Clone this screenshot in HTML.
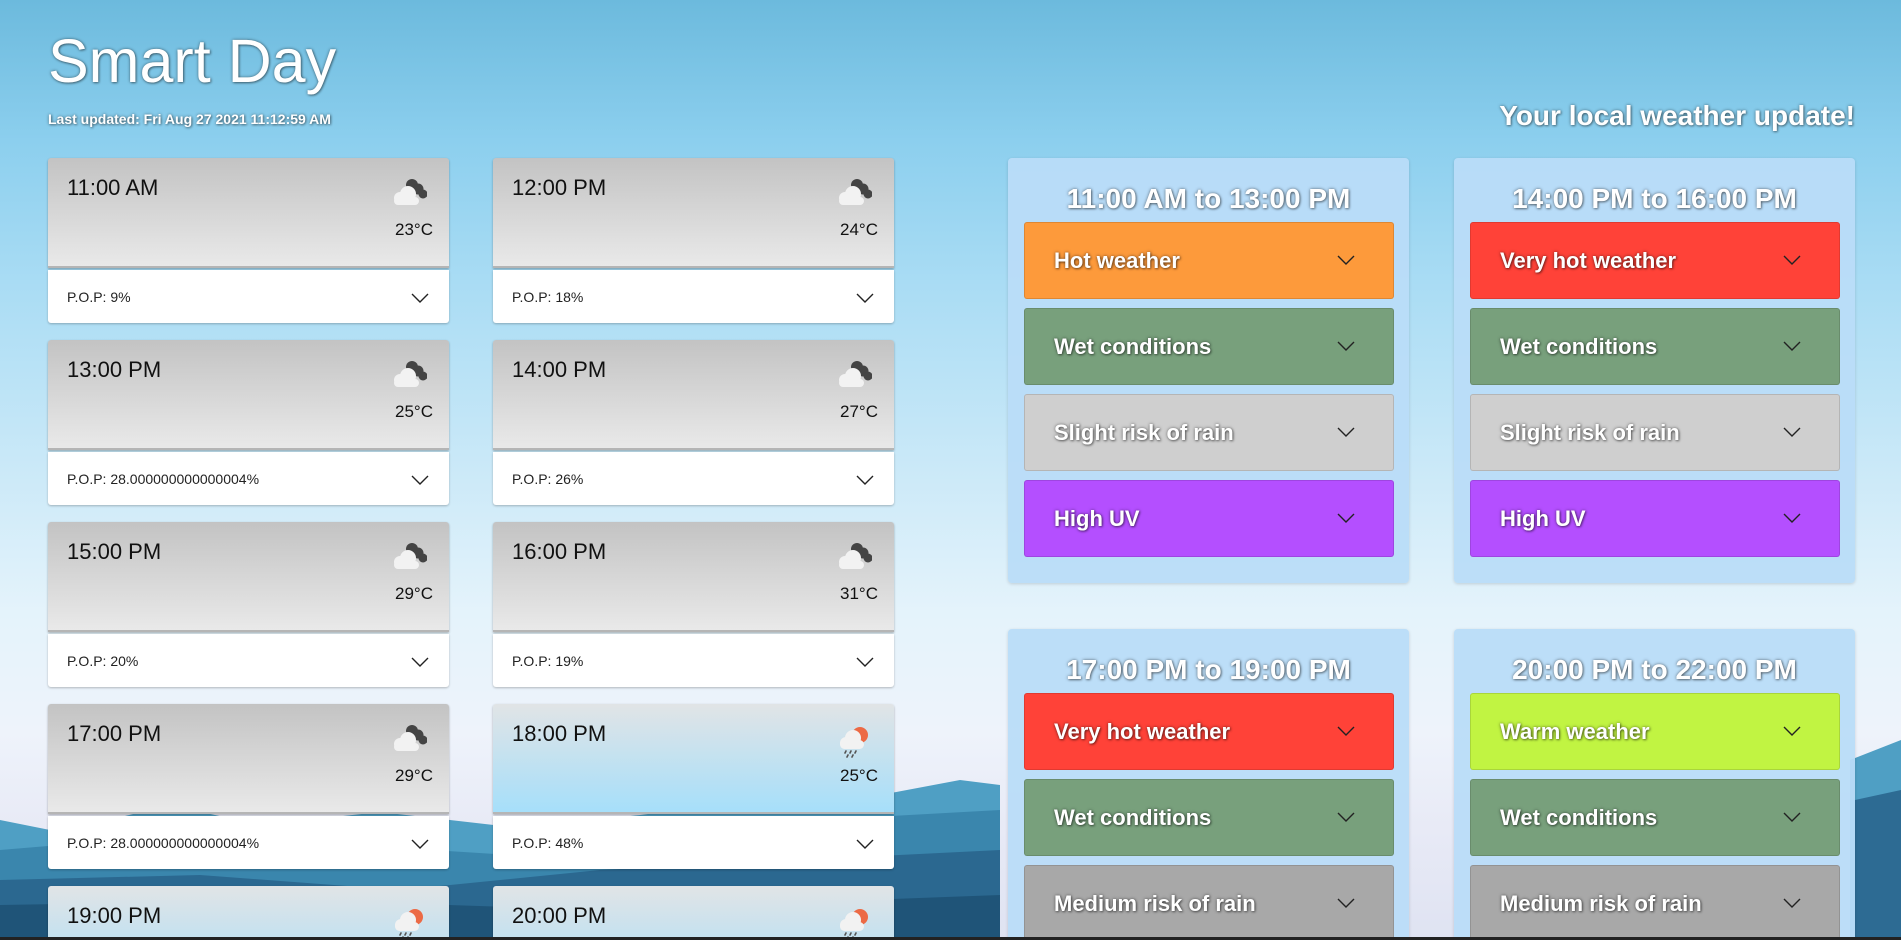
<!DOCTYPE html>
<html><head><meta charset="utf-8"><style>
*{margin:0;padding:0;box-sizing:border-box}
html{width:1901px;height:940px;overflow:hidden}
body{width:1901px;height:940px;overflow:hidden;position:relative;font-family:"Liberation Sans",sans-serif;}
#wrap{position:absolute;left:0;top:0;width:1901px;height:940px;overflow:hidden;
background:linear-gradient(180deg,#6cbadd 0%,#8ccfee 15%,#a9dcf4 30%,#cbe9f8 50%,#e4f3fb 65%,#eef3fb 78%,#e8eaf6 88%,#dfe3f2 100%);}
.bg{position:absolute;left:0;top:0}
.t{position:absolute;color:#fff;text-shadow:0 0 3px rgba(0,0,0,.45),1px 1px 2px rgba(0,0,0,.35)}
.card{position:absolute;width:401px;height:165px}
.top{position:absolute;left:0;top:0;width:401px;height:110px;border-radius:3px 3px 0 0;background:linear-gradient(180deg,#c3c3c3,#e9e9e9);box-shadow:0 1px 2px rgba(0,0,0,.3);border-bottom:2px solid #b5b5b5}
.top.b{background:linear-gradient(180deg,#e1e4e6,#a6dffa)}
.bot{position:absolute;left:0;top:112px;width:401px;height:53px;background:#fff;border-radius:0 0 3px 3px;box-shadow:0 1px 2px rgba(0,0,0,.25)}
.time{position:absolute;left:19px;top:17px;font-size:22px;color:#111}
.temp{position:absolute;right:16px;top:62px;font-size:17px;color:#111}
.pop{position:absolute;left:19px;top:19px;font-size:14px;color:#222}
.chev{position:absolute;right:20px;top:20px}
.ico{position:absolute;right:22px;top:20px}
.panel{position:absolute;width:401px;height:425px;background:rgba(185,220,248,.95);border-radius:4px;box-shadow:0 1px 3px rgba(0,0,0,.15)}
.ph{position:absolute;left:0;width:100%;top:25px;text-align:center;font-size:28px;font-weight:bold;color:#fff;text-shadow:0 0 3px rgba(0,0,0,.5),1px 1px 2px rgba(0,0,0,.35)}
.it{position:absolute;left:16px;width:370px;height:77px;border-radius:3px;border:1px solid rgba(0,0,0,.12)}
.it span{position:absolute;left:29px;top:25px;font-size:22px;font-weight:bold;color:#fff;text-shadow:0 0 3px rgba(0,0,0,.5),1px 1px 2px rgba(0,0,0,.4)}
.it svg{position:absolute;right:38px;top:32px}
.bar{position:absolute;left:0;top:937px;width:1901px;height:3px;background:#222;z-index:10}
</style></head><body>
<div id="wrap">
<svg class="bg" width="1901" height="940" viewBox="0 0 1901 940">
<polygon points="0,820 60,832 170,805 260,825 380,812 520,828 640,815 760,800 880,795 960,780 1000,785 1000,940 0,940" fill="#4f9fc4"/>
<polygon points="1850,760 1901,740 1901,940 1850,940" fill="#4f9fc4"/>
<polygon points="0,850 120,840 250,860 400,848 560,858 700,835 820,820 1000,810 1000,940 0,940" fill="#3a86ad"/>
<polygon points="1855,800 1901,790 1901,940 1855,940" fill="#2d6b93"/>
<polygon points="0,880 200,875 400,890 600,870 800,860 1000,850 1000,940 0,940" fill="#2b6890"/>
<polygon points="0,905 300,900 600,910 1000,895 1000,940 0,940" fill="#1f5478"/>
</svg>
<div class="t" style="left:48px;top:26px;font-size:61px">Smart Day</div>
<div class="t" style="left:48px;top:111px;font-size:14px;font-weight:bold">Last updated: Fri Aug 27 2021 11:12:59 AM</div>
<div class="t" style="right:46px;top:100px;font-size:28px;font-weight:bold">Your local weather update!</div>
<div id="cards"></div>
<div class="bar"></div>
</div>
<script>
const cloud='<svg width="36" height="28" viewBox="0 0 36 28"><g fill="#444"><circle cx="21" cy="7" r="6"/><circle cx="27" cy="11" r="5.5"/><circle cx="32" cy="16" r="4.5"/></g><g fill="#f2f2f2"><circle cx="9" cy="20" r="6"/><circle cx="17" cy="16" r="8"/><rect x="3" y="19" width="25" height="8" rx="4"/></g></svg>';
const rain='<svg width="36" height="34" viewBox="0 0 36 34"><circle cx="24" cy="11" r="8" fill="#ec6a45"/><g fill="#f2f2f2"><circle cx="10" cy="19" r="6"/><circle cx="17" cy="14" r="8"/><rect x="4" y="16" width="24" height="9" rx="4.5"/></g><g stroke="#555" stroke-width="1.6" stroke-linecap="round"><line x1="10" y1="27" x2="9" y2="29"/><line x1="15" y1="27" x2="14" y2="29"/><line x1="20" y1="27" x2="19" y2="29"/><line x1="12" y1="31" x2="11" y2="33"/><line x1="17" y1="31" x2="16" y2="33"/></g></svg>';
const chev='<svg width="18" height="10" viewBox="0 0 18 10"><path d="M1 1 L9 9 L17 1" fill="none" stroke="#222" stroke-width="1.4"/></svg>';
const data=[["11:00 AM","23°C","9%",0],["12:00 PM","24°C","18%",0],["13:00 PM","25°C","28.000000000000004%",0],["14:00 PM","27°C","26%",0],["15:00 PM","29°C","20%",0],["16:00 PM","31°C","19%",0],["17:00 PM","29°C","28.000000000000004%",0],["18:00 PM","25°C","48%",1],["19:00 PM","","",1],["20:00 PM","","",1]];
let h='';
data.forEach((d,i)=>{const x=i%2?493:48,y=158+Math.floor(i/2)*182;
h+=`<div class="card" style="left:${x}px;top:${y}px"><div class="top${d[3]?' b':''}"><div class="time">${d[0]}</div><div class="ico">${d[3]?rain:cloud}</div><div class="temp">${d[1]}</div></div><div class="bot"><div class="pop">P.O.P: ${d[2]}</div><div class="chev">${chev}</div></div></div>`;});
const P=[[1008,158,"11:00 AM to 13:00 PM",[["Hot weather","#fd9a3b"],["Wet conditions","#78a07c"],["Slight risk of rain","#cfcfcf"],["High UV","#b44fff"]]],
[1454,158,"14:00 PM to 16:00 PM",[["Very hot weather","#ff4238"],["Wet conditions","#78a07c"],["Slight risk of rain","#cfcfcf"],["High UV","#b44fff"]]],
[1008,629,"17:00 PM to 19:00 PM",[["Very hot weather","#ff4238"],["Wet conditions","#78a07c"],["Medium risk of rain","#a8a8a8"]]],
[1454,629,"20:00 PM to 22:00 PM",[["Warm weather","#c1f442"],["Wet conditions","#78a07c"],["Medium risk of rain","#a8a8a8"]]]];
P.forEach(p=>{h+=`<div class="panel" style="left:${p[0]}px;top:${p[1]}px"><div class="ph">${p[2]}</div>`;
p[3].forEach((it,j)=>{h+=`<div class="it" style="top:${64+j*86}px;background:${it[1]}"><span>${it[0]}</span>${chev}</div>`;});h+='</div>';});
document.getElementById('cards').innerHTML=h;
</script>
</body></html>
